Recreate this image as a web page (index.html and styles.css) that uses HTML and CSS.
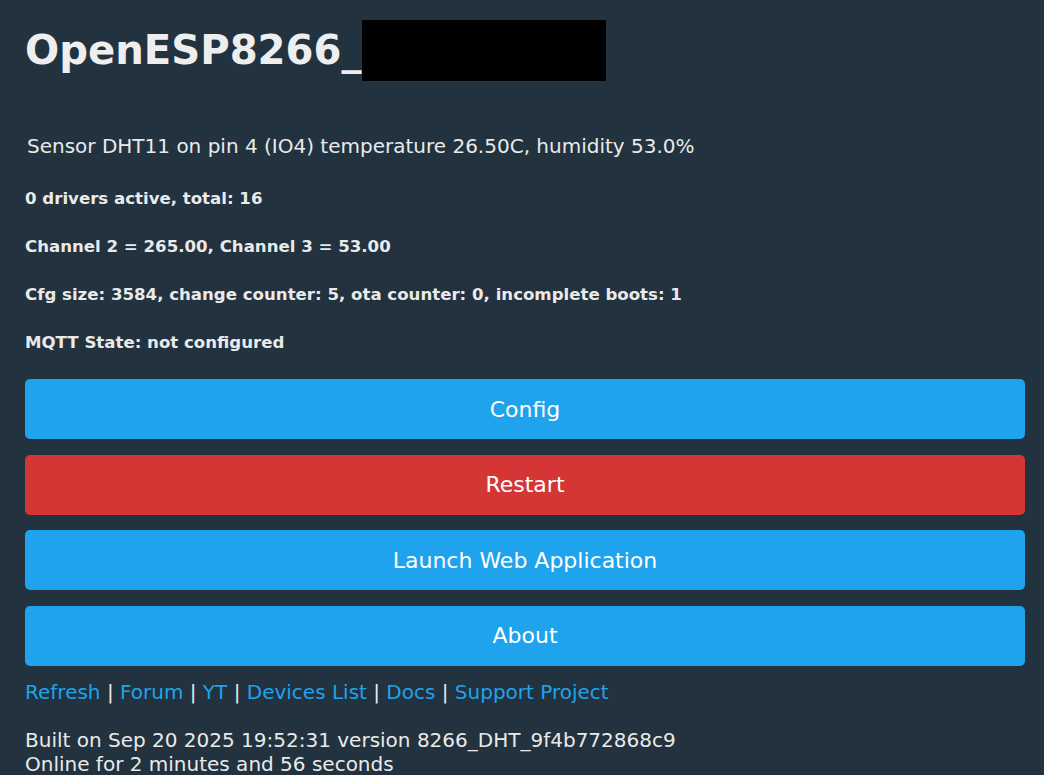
FILE: index.html
```html
<!DOCTYPE html>
<html>
<head>
<meta charset="utf-8">
<link rel="stylesheet" href="styles.css">
</head>
<body>
<div class="page">
  <h1 class="title">OpenESP8266_<span class="redact"></span></h1>
  <div class="sensor">Sensor DHT11 on pin 4 (IO4) temperature 26.50C, humidity 53.0%</div>
  <div class="stats">
    <p>0 drivers active, total: 16</p>
    <p>Channel 2 = 265.00, Channel 3 = 53.00</p>
    <p>Cfg size: 3584, change counter: 5, ota counter: 0, incomplete boots: 1</p>
    <p>MQTT State: not configured</p>
  </div>
  <div class="buttons">
    <button class="btn">Config</button>
    <button class="btn bred">Restart</button>
    <button class="btn">Launch Web Application</button>
    <button class="btn">About</button>
  </div>
  <div class="links"><a href="#">Refresh</a> | <a href="#">Forum</a> | <a href="#">YT</a> | <a href="#">Devices List</a> | <a href="#">Docs</a> | <a href="#">Support Project</a></div>
  <div class="footer">Built on Sep 20 2025 19:52:31 version 8266_DHT_9f4b772868c9<br>Online for 2 minutes and 56 seconds</div>
</div>
</body>
</html>
```
FILE: styles.css
```css
html, body {
  margin: 0;
  padding: 0;
  background: #22323f;
  color: #eaeaea;
  font-family: "DejaVu Sans", Verdana, sans-serif;
}
.page {
  padding: 20px 19px 0 25px;
}
.title {
  margin: 0;
  font-size: 40.2px;
  font-weight: bold;
  line-height: 61px;
  display: flex;
  align-items: flex-start;
  color: #eeeeee;
}
.redact {
  display: inline-block;
  width: 244px;
  height: 61px;
  background: #000;
}
.sensor {
  margin-top: 51px;
  padding-left: 2px;
  font-size: 20px;
  line-height: 28px;
}
.stats {
  margin-top: 15px;
}
.stats p {
  margin: 0;
  font-size: 16.6px;
  font-weight: bold;
  line-height: 48px;
}
.buttons {
  margin-top: 12px;
  display: flex;
  flex-direction: column;
  gap: 15.5px;
}
.btn {
  border: 0;
  border-radius: 5px;
  background: #1fa3ec;
  color: #ffffff;
  font-family: "DejaVu Sans", Verdana, sans-serif;
  font-size: 22px;
  height: 60px;
  width: 100%;
  padding: 0;
}
.bred {
  background: #d43535;
}
.links {
  margin-top: 12px;
  font-size: 20px;
  line-height: 28px;
  color: #eaeaea;
}
.links a {
  color: #1fa3ec;
  text-decoration: none;
}
.footer {
  margin-top: 22px;
  font-size: 20px;
  line-height: 24px;
}
```
